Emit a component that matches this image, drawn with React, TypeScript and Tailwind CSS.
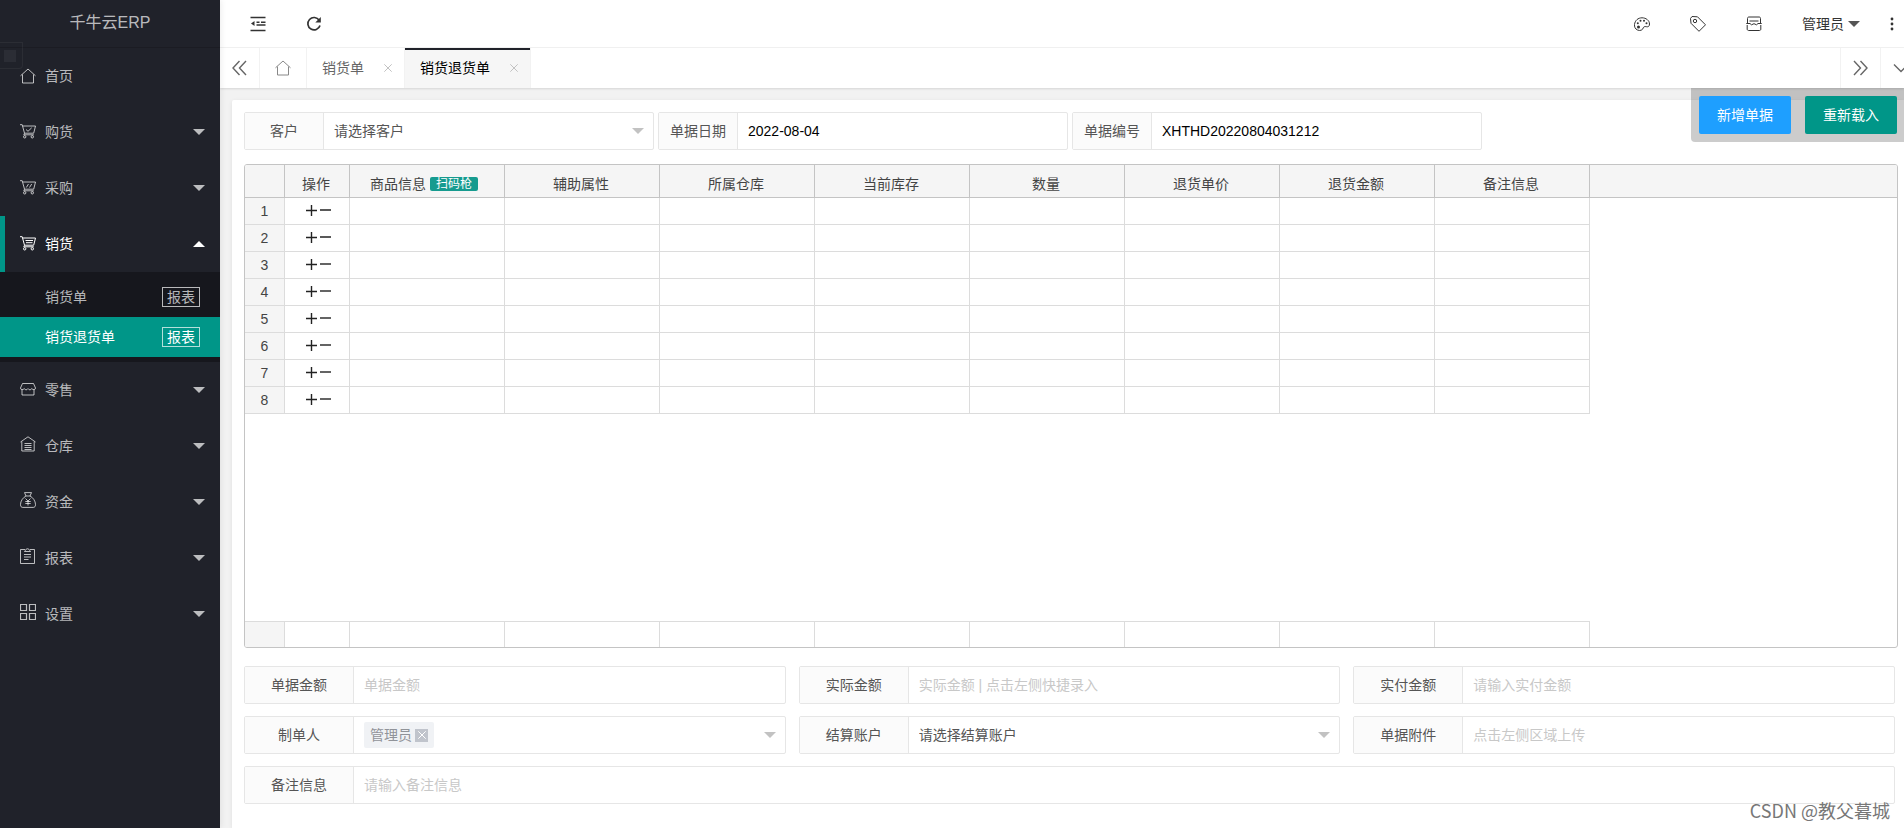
import React from "react"
import clsx from "clsx"

const svgProps = {
    width: 16,
    height: 16,
    viewBox: "0 0 16 16",
    fill: "none",
    stroke: "currentColor",
    strokeWidth: 1,
    "aria-hidden": true,
}

function HomeIcon() {
    return (
        <svg {...svgProps} className="shrink-0">
            <path d="M0.5 7.8L8 1l7.500 6.800M2.500 6.500v8.500h11V6.500" />
        </svg>
    )
}

function CartIcon({ children }: { children?: React.ReactNode }) {
    return (
        <svg {...svgProps} className="shrink-0">
            <path d="M0 .7h2.200L4.500 9.200h9.200L15.500 2H2.600" />
            <path d="M4.500 9.200l-.7 1.600h10" />
            <circle cx="4.700" cy="12.800" r="1.200" />
            <circle cx="12.300" cy="12.800" r="1.200" />
            {children}
        </svg>
    )
}

function ShopIcon() {
    return (
        <svg {...svgProps} className="mb-[2px] shrink-0">
            <path d="M2.500 2.500h11l2 4.500c0 2-2.500 2.200-3.700.6-1.200 1.600-2.700 1.600-3.800 0-1.100 1.600-2.600 1.600-3.800 0C3 9.200.5 9 .5 7z" />
            <path d="M2 8.800v5.200h12V8.800" />
        </svg>
    )
}

function WarehouseIcon() {
    return (
        <svg {...svgProps} className="mb-1 shrink-0">
            <path d="M0.500 6L8 0.800 15.500 6M1.800 5.500v9.500h12.400V5.500M4.500 7.500h7M4.500 9.500h7M4.500 11.500h7M4.500 13.500h7" />
        </svg>
    )
}

function MoneyIcon() {
    return (
        <svg {...svgProps} className="mb-1 shrink-0">
            <path d="M4.500.6h7L10 4H6zM6 4C3 5.500.5 9 .5 12.500c0 2 .8 2.900 2.300 2.900h10.400c1.500 0 2.300-.9 2.300-2.900C15.500 9 13 5.500 10 4" />
            <path d="M5.500 6.500L8 9l2.500-2.500M8 9v4.500M5.300 9.500h5.400M5.300 11.500h5.400" />
        </svg>
    )
}

function ReportIcon() {
    return (
        <svg {...svgProps} className="mb-1 shrink-0">
            <path d="M5 1.500H.5v14h14v-14H10M4.500 3.500h6L9.500 2.200C9.300.3 5.700.3 5.500 2.200zM4 6.500h7M4 9h7M4 11.500h4.500" />
        </svg>
    )
}

function GridIcon() {
    return (
        <svg {...svgProps} className="mb-1 shrink-0">
            <path d="M.5.5h6v6h-6zM9.500.5h6v6h-6zM.5 9.500h6v6h-6zM9.500 9.500h6v6h-6z" strokeWidth={1.200} />
        </svg>
    )
}

function Caret({ up = false, className = "" }: { up?: boolean; className?: string }) {
    return (
        <svg width="12" height="6" viewBox="0 0 12 6" fill="currentColor" aria-hidden="true" className={clsx("shrink-0", up && "rotate-180", className)}>
            <path d="M0 0h12L6 6z" />
        </svg>
    )
}

function CloseIcon() {
    return (
        <svg width="8" height="8" viewBox="0 0 8 8" fill="none" stroke="currentColor" aria-hidden="true">
            <path d="M.3.3l7.400 7.400M7.700.3L.3 7.700" />
        </svg>
    )
}

const menus = [
    { label: "首页", icon: <HomeIcon />, leaf: true },
    { label: "购货", icon: <CartIcon><path d="M6 5.500l2 1.800 3.700-3.500" /></CartIcon> },
    { label: "采购", icon: <CartIcon><path d="M6.300 7.500l2.200-3.500M9.500 7.500L11.700 4" /></CartIcon> },
    { label: "销货", icon: <CartIcon><path d="M5.500 4.500h7.500M6 6.700h6.500" /></CartIcon>, children: ["销货单", "销货退货单"] },
    { label: "零售", icon: <ShopIcon /> },
    { label: "仓库", icon: <WarehouseIcon /> },
    { label: "资金", icon: <MoneyIcon /> },
    { label: "报表", icon: <ReportIcon /> },
    { label: "设置", icon: <GridIcon /> },
]

const columns = ["辅助属性", "所属仓库", "当前库存", "数量", "退货单价", "退货金额", "备注信息"]
const rows = [1, 2, 3, 4, 5, 6, 7, 8]

function Sidebar() {
    return (
        <aside className="relative z-20 w-[220px] shrink-0 bg-[#20222a] text-white/70 shadow-[1px_0_6px_rgba(0,0,0,0.08)]">
            <div className="flex h-12 items-center justify-center border-b border-black/15 pb-1 pt-[2px] text-base">千牛云ERP</div>
            {/* drag handle */}
            <div className="absolute left-0 top-[42px] flex h-[27px] w-[23px] items-center rounded-br border border-l-0 border-white/5 pl-1">
                <span className="h-3 w-3 bg-white/5" />
            </div>
            <nav>
                <ul>
                    {menus.map((menu) => (
                        <li key={menu.label}>
                            <a
                                href="#"
                                className={clsx(
                                    "flex h-14 items-center gap-[9px] pr-[15px]",
                                    menu.children ? "border-l-[5px] border-[#009688] pl-[15px] text-white" : "pl-5"
                                )}
                            >
                                {menu.icon}
                                <span>{menu.label}</span>
                                {!menu.leaf && <Caret up={!!menu.children} className="ml-auto" />}
                            </a>
                            {menu.children && (
                                <ul className="bg-black/30 py-[5px]">
                                    {menu.children.map((child) => {
                                        const active = child === "销货退货单"
                                        return (
                                            <li
                                                key={child}
                                                className={clsx("flex h-10 items-center justify-between pl-[45px] pr-5", active && "bg-[#009688] text-white")}
                                            >
                                                <a href="#">{child}</a>
                                                <a href="#" className="flex h-5 items-center border border-white/70 px-1">报表</a>
                                            </li>
                                        )
                                    })}
                                </ul>
                            )}
                        </li>
                    ))}
                </ul>
            </nav>
        </aside>
    )
}

function Header() {
    return (
        <header className="flex h-12 items-center border-b border-[#f2f2f2] bg-white text-[#333]">
            <button type="button" aria-label="侧边伸缩" className="ml-[10px] flex w-14 justify-center">
                <svg {...svgProps} strokeWidth={1.400}>
                    <path d="M.5 1.500h15M6.500 6.300h3M11 6.300h4.500M6.500 9h9M.5 14.500h15" />
                    <path d="M4.500 5v5L1 7.500z" fill="currentColor" stroke="none" />
                </svg>
            </button>
            <button type="button" aria-label="刷新" className="flex w-14 justify-center">
                <svg {...svgProps} strokeWidth={1.700}>
                    <path d="M13.200 4.200A6.200 6.200 0 1 0 14 9.500" />
                    <path d="M14.800 1v5.500H9.300z" fill="currentColor" stroke="none" />
                </svg>
            </button>
            <div className="ml-auto flex items-center">
                <button type="button" aria-label="主题" className="flex w-14 justify-center">
                    <svg {...svgProps}>
                        <path d="M3.500 14C1 13 .3 10.500.5 8.500 1 4.500 4 1.800 8 1.800s7.500 2.700 7.500 6.200c0 2.500-1.500 3-3 2.700-2-.5-3 .3-3.300 1.300-.5 2-3 3.200-5.700 2z" />
                        <g fill="currentColor" stroke="none">
                            <circle cx="4.500" cy="11" r="1.500" />
                            <circle cx="3.800" cy="7.200" r="1" />
                            <circle cx="6.500" cy="4.700" r="1" />
                            <circle cx="10" cy="4.700" r="1" />
                            <circle cx="12.500" cy="7.300" r="1" />
                        </g>
                    </svg>
                </button>
                <button type="button" aria-label="便签" className="flex w-14 justify-center">
                    <svg {...svgProps}>
                        <path d="M.5 2.500l1.500-2 5.500.3 8 8-6.500 6.500L1 7.300z" />
                        <circle cx="5" cy="5" r="1.700" />
                    </svg>
                </button>
                <button type="button" aria-label="消息" className="flex w-14 justify-center">
                    <svg {...svgProps}>
                        <path d="M1.500 7V2.500c0-1 .5-1.500 1.500-1.500h10c1 0 1.500.5 1.500 1.500V7M3.500 5h9M.3 7.500h3.700l1.500 1.300L8 7.700l2.500 1.100L12 7.500h3.700M1.200 9v4c0 1 .6 1.500 1.500 1.500h10.600c1 0 1.500-.5 1.500-1.500V9" />
                    </svg>
                </button>
                <button type="button" className="flex items-center gap-1 px-5">
                    管理员
                    <Caret className="text-[#555]" />
                </button>
                <button type="button" aria-label="更多" className="flex w-6 justify-center">
                    <svg {...svgProps} fill="currentColor" stroke="none">
                        <circle cx="8" cy="3" r="1.400" />
                        <circle cx="8" cy="8" r="1.400" />
                        <circle cx="8" cy="13" r="1.400" />
                    </svg>
                </button>
            </div>
        </header>
    )
}

function TabBar() {
    return (
        <div className="relative z-10 flex h-10 bg-white text-[#666] shadow-[0_1px_2px_rgba(0,0,0,0.12)]">
            <button type="button" aria-label="向左" className="flex w-10 items-center justify-center border-r border-[#f2f2f2]">
                <svg {...svgProps} strokeWidth={1.400}>
                    <path d="M7.500 1L1 8l6.500 7M14 1L7.500 8l6.500 7" />
                </svg>
            </button>
            <a href="#" aria-label="首页" className="flex w-[47px] items-center justify-center border-r border-[#f2f2f2] text-[#888]">
                <HomeIcon />
            </a>
            <div className="flex items-center gap-5 border-r border-[#f2f2f2] pl-[15px] pr-3">
                <a href="#">销货单</a>
                <button type="button" aria-label="关闭销货单" className="text-[#c2c2c2]"><CloseIcon /></button>
            </div>
            <div className="relative flex items-center gap-5 border-r border-[#f2f2f2] bg-[#f6f6f6] pl-[15px] pr-3">
                <span className="absolute inset-x-0 top-0 h-[2px] bg-[#20222a]" />
                <a href="#" className="text-black">销货退货单</a>
                <button type="button" aria-label="关闭销货退货单" className="text-[#c2c2c2]"><CloseIcon /></button>
            </div>
            <button type="button" aria-label="向右" className="ml-auto flex w-10 items-center justify-center border-l border-[#f2f2f2]">
                <svg {...svgProps} strokeWidth={1.400}>
                    <path d="M1 1l6.500 7L1 15M7.500 1L14 8l-6.500 7" />
                </svg>
            </button>
            <button type="button" aria-label="标签操作" className="flex w-6 items-center overflow-hidden border-l border-[#f2f2f2] pl-3">
                <svg {...svgProps} strokeWidth={1.400} className="shrink-0">
                    <path d="M1 4.500l7 7 7-7" />
                </svg>
            </button>
        </div>
    )
}

type FieldProps = {
    id: string
    label: string
    wide?: boolean
    className?: string
    children: React.ReactNode
}

function Field({ id, label, wide = false, className = "", children }: FieldProps) {
    return (
        <div className={clsx("flex h-[38px] rounded-xs border border-[#e6e6e6] bg-white", className)}>
            <label
                htmlFor={id}
                className={clsx(
                    "flex shrink-0 items-center justify-center border-r border-[#e6e6e6] bg-[#fbfbfb] text-[#555]",
                    wide ? "w-[109px]" : "w-[79px]"
                )}
            >
                {label}
            </label>
            <div className="relative flex min-w-0 flex-1 items-center">{children}</div>
        </div>
    )
}

function TextInput({ id, value, placeholder }: { id: string; value?: string; placeholder?: string }) {
    return (
        <input
            id={id}
            type="text"
            defaultValue={value}
            placeholder={placeholder}
            className="h-full w-full px-[10px] text-black outline-none placeholder:text-[#c8c8c8]"
        />
    )
}

function SelectInput({ id, text }: { id: string; text: string }) {
    return (
        <>
            <select id={id} className="h-full w-full appearance-none px-[10px] text-[#555] outline-none">
                <option>{text}</option>
            </select>
            <Caret className="pointer-events-none absolute right-[9px] text-[#c2c2c2]" />
        </>
    )
}

function ColGroup() {
    return (
        <colgroup>
            <col className="w-10" />
            <col className="w-[65px]" />
            <col className="w-[155px]" />
            {columns.map((name) => (
                <col key={name} className="w-[155px]" />
            ))}
            <col />
        </colgroup>
    )
}

function GoodsTable() {
    const th = "border-b border-r border-[#c4c4c4] pr-[2px] pt-[6px] font-normal"
    return (
        <div className="flex min-h-[484px] flex-col justify-between overflow-hidden rounded-[3px] border border-[#c4c4c4] text-[#444]">
            <table className="w-full table-fixed border-separate border-spacing-0 text-center">
                <ColGroup />
                <thead>
                    <tr className="h-[33px] bg-[#f5f5f5]">
                        <th className={th} />
                        <th className={th}>操作</th>
                        <th className={th}>
                            <span className="flex items-center justify-center gap-1 pr-1">
                                商品信息
                                <button type="button" className="h-[14px] rounded-xs bg-[#169b8f] px-[6px] text-xs leading-[14px] text-white">扫码枪</button>
                            </span>
                        </th>
                        {columns.map((name) => (
                            <th key={name} className={th}>{name}</th>
                        ))}
                        <th className="border-b border-[#c4c4c4]" />
                    </tr>
                </thead>
                <tbody>
                    {rows.map((row) => (
                        <tr key={row} className="h-[27px]">
                            <td className="border-b border-r border-[#dcdcdc] bg-[#f5f5f5]">{row}</td>
                            <td className="border-b border-r border-[#dcdcdc] text-[#222]">
                                <span className="flex items-center justify-center gap-[3px] pb-[2px] pl-[2px]">
                                    <button type="button" aria-label="添加行">
                                        <svg width="11" height="11" viewBox="0 0 11 11" stroke="currentColor" strokeWidth="1.400" className="block">
                                            <path d="M0 5.500h11M5.500 0v11" />
                                        </svg>
                                    </button>
                                    <button type="button" aria-label="删除行">
                                        <svg width="11" height="11" viewBox="0 0 11 11" stroke="currentColor" strokeWidth="1.400" className="block">
                                            <path d="M0 5h11" />
                                        </svg>
                                    </button>
                                </span>
                            </td>
                            <td className="border-b border-r border-[#dcdcdc]" />
                            {columns.map((name) => (
                                <td key={name} className="border-b border-r border-[#dcdcdc]" />
                            ))}
                            <td />
                        </tr>
                    ))}
                </tbody>
            </table>
            {/* totals */}
            <table className="w-full table-fixed border-separate border-spacing-0">
                <ColGroup />
                <tbody>
                    <tr className="h-[26px]">
                        <td className="border-r border-t border-[#dcdcdc] bg-[#f5f5f5]" />
                        <td className="border-r border-t border-[#dcdcdc]" />
                        <td className="border-r border-t border-[#dcdcdc]" />
                        {columns.map((name) => (
                            <td key={name} className="border-r border-t border-[#dcdcdc]" />
                        ))}
                        <td />
                    </tr>
                </tbody>
            </table>
        </div>
    )
}

export default function App() {
    return (
        <div className="flex min-h-screen overflow-hidden bg-[#f2f2f2] font-['Liberation_Sans','Noto_Sans_CJK_SC',sans-serif] text-sm">
            <Sidebar />
            <div className="relative flex min-w-0 flex-1 flex-col">
                <Header />
                <TabBar />
                <main className="relative flex flex-1 flex-col pl-3 pt-3">
                    {/* floating actions */}
                    <div className="absolute right-0 top-0 flex gap-[14px] rounded-bl bg-black/20 py-2 pl-2 pr-[7px] text-white">
                        <button type="button" className="h-[38px] rounded-xs bg-[#1e9fff] px-[18px]">新增单据</button>
                        <button type="button" className="h-[38px] rounded-xs bg-[#009688] px-[18px]">重新载入</button>
                    </div>
                    <div className="flex-1 rounded-tl-xs bg-white pb-6 pl-3 pr-[6px] pt-3 shadow-[0_1px_4px_rgba(0,0,0,0.08)]">
                        <div className="flex gap-1">
                            <Field id="customer" label="客户" className="w-[410px]">
                                <SelectInput id="customer" text="请选择客户" />
                            </Field>
                            <Field id="date" label="单据日期" className="w-[410px]">
                                <TextInput id="date" value="2022-08-04" />
                            </Field>
                            <Field id="number" label="单据编号" className="w-[410px]">
                                <TextInput id="number" value="XHTHD20220804031212" />
                            </Field>
                        </div>
                        <div className="mb-[18px] mt-[14px]">
                            <GoodsTable />
                        </div>
                        <div className="mr-[3px] grid grid-cols-3 gap-x-[13px] gap-y-3">
                            <Field id="total" label="单据金额" wide>
                                <TextInput id="total" placeholder="单据金额" />
                            </Field>
                            <Field id="actual" label="实际金额" wide>
                                <TextInput id="actual" placeholder="实际金额 | 点击左侧快捷录入" />
                            </Field>
                            <Field id="money" label="实付金额" wide>
                                <TextInput id="money" placeholder="请输入实付金额" />
                            </Field>
                            <Field id="user" label="制单人" wide>
                                <div className="ml-[10px] flex h-[26px] items-center gap-[3px] rounded-xs bg-[#f0f2f5] px-[6px] text-[#909399]">
                                    管理员
                                    <button type="button" aria-label="移除管理员" className="flex h-[13px] w-[13px] items-center justify-center bg-[#c0c4cc] text-white">
                                        <CloseIcon />
                                    </button>
                                </div>
                                <input id="user" type="text" className="h-full min-w-0 flex-1 outline-none" />
                                <Caret className="pointer-events-none absolute right-[9px] text-[#c2c2c2]" />
                            </Field>
                            <Field id="account" label="结算账户" wide>
                                <SelectInput id="account" text="请选择结算账户" />
                            </Field>
                            <Field id="file" label="单据附件" wide>
                                <TextInput id="file" placeholder="点击左侧区域上传" />
                            </Field>
                            <Field id="remark" label="备注信息" wide className="col-span-3">
                                <TextInput id="remark" placeholder="请输入备注信息" />
                            </Field>
                        </div>
                    </div>
                </main>
                <div className="pointer-events-none absolute bottom-[6px] right-[14px] font-['Noto_Sans_CJK_SC',sans-serif] text-lg leading-6 text-[#777]">CSDN @教父暮城</div>
            </div>
        </div>
    )
}
